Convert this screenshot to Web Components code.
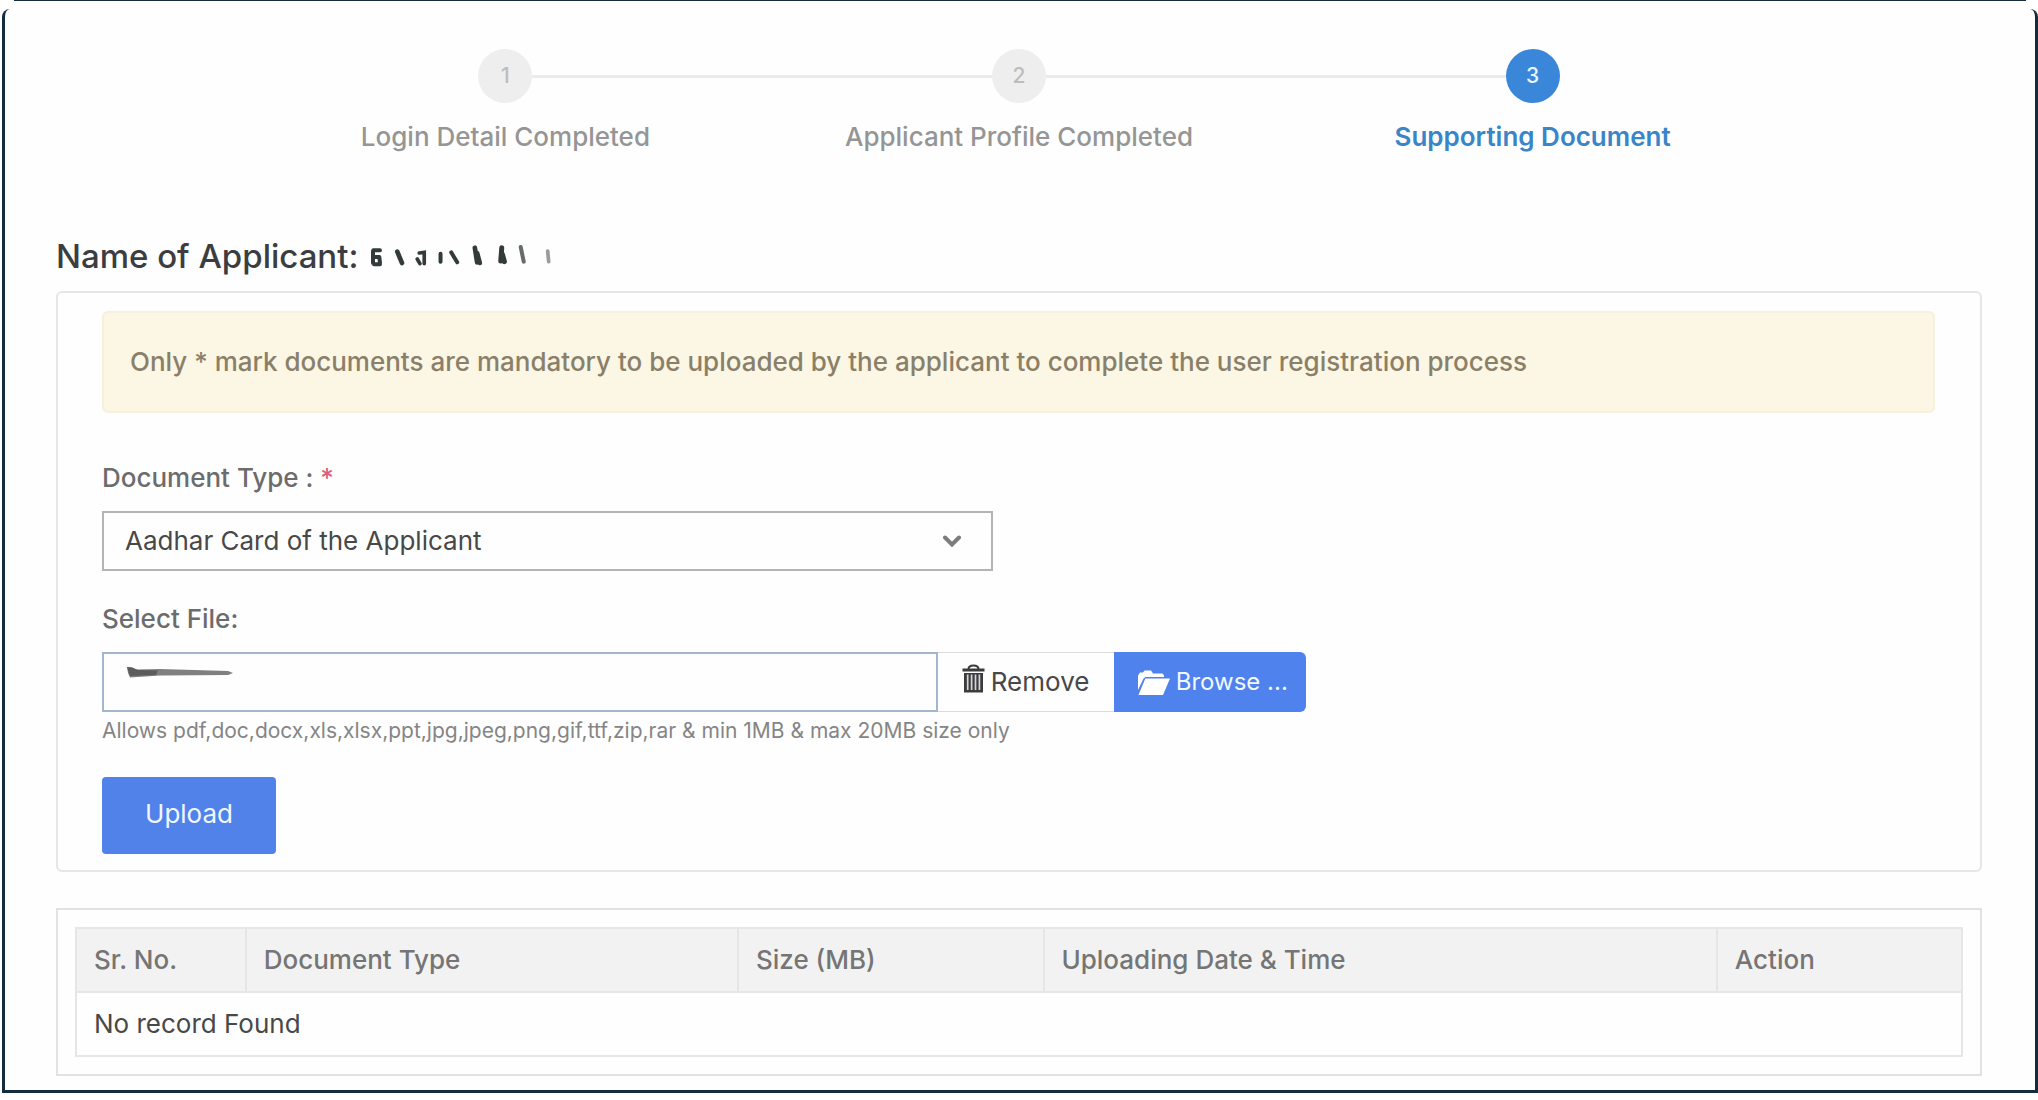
<!DOCTYPE html>
<html lang="en">
<head>
<meta charset="utf-8">
<title>Supporting Document</title>
<style>
    body {
        margin: 0;
        background: #fff;
        font: 500 26px/32px Inter, "Noto Sans", sans-serif;
        color: #4a4a4a;
    }
</style>
</head>
<body>

<page-frame>
    <step-list>
        <step-item number="1" first>Login Detail Completed</step-item>
        <step-item number="2">Applicant Profile Completed</step-item>
        <step-item number="3" last active>Supporting Document</step-item>
    </step-list>
    <applicant-name>Name of Applicant:</applicant-name>
    <upload-panel>
        <alert-note slot="note">Only * mark documents are mandatory to be uploaded by the applicant to complete the user registration process</alert-note>
        <select-field label="Document Type :" required options="Aadhar Card of the Applicant"></select-field>
        <file-field label="Select File:">Allows pdf,doc,docx,xls,xlsx,ppt,jpg,jpeg,png,gif,ttf,zip,rar &amp; min 1MB &amp; max 20MB size only</file-field>
        <primary-button>Upload</primary-button>
    </upload-panel>
    <record-table></record-table>
</page-frame>

<script>
// ─── Inline SVG ─────────────────────────────────────────────────────────
const CHEVRON = '<svg viewBox="0 0 18 12" width="18" height="12" fill="none" stroke="#7d7d7d" stroke-width="4" stroke-linecap="round" aria-hidden="true"><path d="M2 2.5 9 9.5 16 2.5"/></svg>';
const TRASH = `<svg viewBox="0 0 23 29" width="23" height="29" aria-hidden="true">
    <path d="M6.5 5C6.5 2.5 8 1.5 11.5 1.5S16.5 2.5 16.5 5" fill="none" stroke="#3c3c3c" stroke-width="2"/>
    <path d="M0.5 4.5H22.5V7.5H0.5z" fill="#3c3c3c"/>
    <path d="M2 9H21V28.5H2z" fill="#3c3c3c"/>
    <path d="M5.7 10.5V26M9.6 10.5V26M13.5 10.5V26M17.4 10.5V26" stroke="#d4d6de" stroke-width="1.7"/>
</svg>`;
const FOLDER = `<svg viewBox="0 0 32 25" width="32" height="25" fill="#fff" aria-hidden="true">
    <path d="M0 20V5.5L2 2.5H5L6.5 0.5H13L15 3.5H24.5L26 5.5V7H7.5L5.5 8.5z"/>
    <path d="M7.3 8.5H32L25 25H0.5z"/>
</svg>`;
// name struck out by hand
const NAME_MARKS = `<svg viewBox="0 0 550 66" width="183" height="22" fill="none" stroke="#333a3a" stroke-linecap="round" aria-hidden="true">
    <path d="M9 18V54M10 16H30M12 36H26M28 36 30 54M12 58H30" stroke-width="12"/>
    <path d="M82 20 96 54" stroke-width="14"/>
    <path d="M148 24 163 22V56M142 42 150 56" stroke-width="11"/>
    <path d="M212 26V50M244 22 262 52" stroke-width="12"/>
    <path d="M315 8 322 52M322 24 330 54" stroke-width="14"/>
    <path d="M396 8 393 48M398 28 404 50" stroke-width="15"/>
    <path d="M453 6 462 50" stroke-width="12" opacity=".75"/>
    <path d="M534 18 537 50" stroke-width="11" opacity=".5"/>
</svg>`;
const FILE_MARK = `<svg class="mark" viewBox="0 0 108 12" width="108" height="12" aria-hidden="true">
    <path d="M1 1 6 1.5 10 3.5 34 3 102 5 107 7 102 9 34 9.5 4 11.5 2 7z" fill="#808080"/>
    <path d="M1 1 6 1.5 12 4 32 4.5 30 9 4 10z" fill="#5c5c5c"/>
</svg>`;

class BaseElement extends HTMLElement {
    constructor() {
        super();
        this.attachShadow({ mode: 'open' });
    }

    connectedCallback() {
        this.shadowRoot.innerHTML = `<style>* { box-sizing: border-box; }${this.css()}</style>${this.html()}`;
    }
}

class PageFrame extends BaseElement {
    css() {
        return `
            :host { display: block; padding: 0 0 6px 2px; }
            .edge { height: 1px; margin: 0 12px 8px; background: #132d3e; }
            .frame {
                padding: 40px 53px 14px 51px;
                border: 3px solid #132d3e; border-top: 0; border-radius: 8px 8px 0 0;
                background: #fefefe;
            }
        `;
    }

    html() {
        return `<div class="edge"></div><main class="frame"><slot></slot></main>`;
    }
}

class StepList extends BaseElement {
    css() {
        return `
            :host { display: block; }
            .steps { display: grid; grid-template-columns: repeat(3, 1fr); width: 80%; margin: 0 auto; }
        `;
    }

    html() {
        return `<div class="steps"><slot></slot></div>`;
    }
}

class StepItem extends BaseElement {
    css() {
        return `
            :host { display: block; text-align: center; color: #959595; }
            .track { display: flex; align-items: center; margin-bottom: 18px; }
            .track::before, .track::after { content: ''; flex: 1; height: 3px; background: #ebebeb; }
            :host([first]) .track::before, :host([last]) .track::after { background: none; }
            .dot {
                display: flex; align-items: center; justify-content: center;
                width: 54px; height: 54px; border-radius: 50%;
                background: #eeeeee; color: #bdbdbd; font-size: 21px;
            }
            :host([active]) { color: #3a85c8; font-weight: 600; }
            :host([active]) .dot { background: #3a87d9; color: #e8f6ff; font-weight: 500; }
        `;
    }

    html() {
        return `<div class="track"><span class="dot">${this.getAttribute('number')}</span></div><slot></slot>`;
    }
}

class ApplicantName extends BaseElement {
    css() {
        return `
            :host { display: block; margin: 83px 0 15px; }
            h1 {
                display: flex; align-items: center; gap: 12px; margin: 0;
                font-size: 33px; line-height: 40px; font-weight: 500; color: #3b3d40;
            }
        `;
    }

    html() {
        return `<h1><slot></slot>${NAME_MARKS}</h1>`;
    }
}

class UploadPanel extends BaseElement {
    css() {
        return `
            :host { display: block; }
            section { padding: 18px 45px 16px 44px; border: 2px solid #e6e6e6; border-radius: 6px; }
            form { display: grid; gap: 32px; margin-top: 49px; }
        `;
    }

    html() {
        return `<section><slot name="note"></slot><form><slot></slot></form></section>`;
    }
}

class AlertNote extends BaseElement {
    css() {
        return `
            :host {
                display: block; box-sizing: border-box; padding: 33px 26px;
                border: 2px solid #f6f0dc; border-radius: 6px;
                background: #fcf6e5; color: #8a8069;
            }
        `;
    }

    html() {
        return `<slot></slot>`;
    }
}

class SelectField extends BaseElement {
    css() {
        return `
            :host { display: block; }
            label { display: block; margin-bottom: 17px; color: #6c6c6c; }
            .star { color: #d9607a; }
            .box { display: grid; align-items: center; width: calc(50% - 26px); }
            select, svg { grid-area: 1 / 1; }
            select {
                appearance: none; width: 100%; height: 60px; padding: 0 60px 0 21px;
                border: 2px solid #b4b4b4; border-radius: 0; background: #fefefe;
                font: inherit; font-weight: 400; color: #484848;
            }
            svg { justify-self: end; margin-right: 32px; pointer-events: none; }
        `;
    }

    html() {
        const options = this.getAttribute('options').split('|').map((o) => `<option>${o}</option>`).join('');
        const star = this.hasAttribute('required') ? ' <span class="star">*</span>' : '';
        return `
            <label for="type">${this.getAttribute('label')}${star}</label>
            <div class="box"><select id="type">${options}</select>${CHEVRON}</div>
        `;
    }
}

class FileField extends BaseElement {
    css() {
        return `
            :host { display: block; }
            label { display: block; margin-bottom: 17px; color: #6c6c6c; }
            .group { display: flex; width: calc(66% - 6px); height: 60px; }
            .caption { display: grid; flex: 1; }
            input, .mark { grid-area: 1 / 1; }
            input {
                width: 100%; min-width: 0; padding: 0 21px;
                border: 2px solid #a3b6cd; border-radius: 0; background: #fefefe; font: inherit;
            }
            .mark { margin: 14px 0 0 24px; pointer-events: none; }
            button {
                display: flex; align-items: center; gap: 6px; padding: 0 0 0 24px;
                border: 1px solid #dcdcdc; border-width: 1px 0;
                background: #fefefe; color: #484848; font: inherit; font-weight: 400;
            }
            svg { flex: none; }
            .remove { width: 176px; }
            .remove svg { margin-bottom: 8px; }
            .browse {
                width: 192px; border: 0; border-radius: 0 6px 6px 0;
                background: #4f82ec; color: #f2f8ff; font-size: 24px;
            }
            small { display: block; margin-top: 5px; font-size: 21px; line-height: 28px; font-weight: 400; color: #858585; }
        `;
    }

    html() {
        return `
            <label for="file">${this.getAttribute('label')}</label>
            <div class="group">
                <div class="caption"><input id="file" type="text" readonly>${FILE_MARK}</div>
                <button type="button" class="remove">${TRASH}Remove</button>
                <button type="button" class="browse">${FOLDER}Browse ...</button>
            </div>
            <small><slot></slot></small>
        `;
    }
}

class PrimaryButton extends BaseElement {
    css() {
        return `
            :host { display: block; }
            button {
                display: block; width: 174px; height: 77px; padding: 0 0 4px;
                border: 0; border-radius: 4px; background: #5182ea; color: #f0f7ff;
                font: inherit; font-weight: 400;
            }
        `;
    }

    html() {
        return `<button type="button"><slot></slot></button>`;
    }
}

class RecordTable extends BaseElement {
    css() {
        return `
            :host { display: block; margin-top: 36px; padding: 17px; border: 2px solid #e2e2e2; }
            table { width: 100%; border-collapse: collapse; table-layout: fixed; }
            th, td { height: 64px; padding: 0 17px; border: 2px solid #e6e6e6; text-align: left; }
            th { background: #f3f2f2; color: #757575; font-weight: 500; }
            td { color: #484848; font-weight: 400; }
        `;
    }

    html() {
        const columns = [
            ['Sr. No.', '9%'],
            ['Document Type', '26.1%'],
            ['Size (MB)', '16.2%'],
            ['Uploading Date &amp; Time', '35.7%'],
            ['Action', '13%'],
        ];
        return `
            <table>
                <thead><tr>${columns.map(([name, width]) => `<th style="width: ${width}">${name}</th>`).join('')}</tr></thead>
                <tbody><tr><td colspan="${columns.length}">No record Found</td></tr></tbody>
            </table>
        `;
    }
}

customElements.define('page-frame', PageFrame);
customElements.define('step-list', StepList);
customElements.define('step-item', StepItem);
customElements.define('applicant-name', ApplicantName);
customElements.define('upload-panel', UploadPanel);
customElements.define('alert-note', AlertNote);
customElements.define('select-field', SelectField);
customElements.define('file-field', FileField);
customElements.define('primary-button', PrimaryButton);
customElements.define('record-table', RecordTable);
</script>
</body>
</html>
